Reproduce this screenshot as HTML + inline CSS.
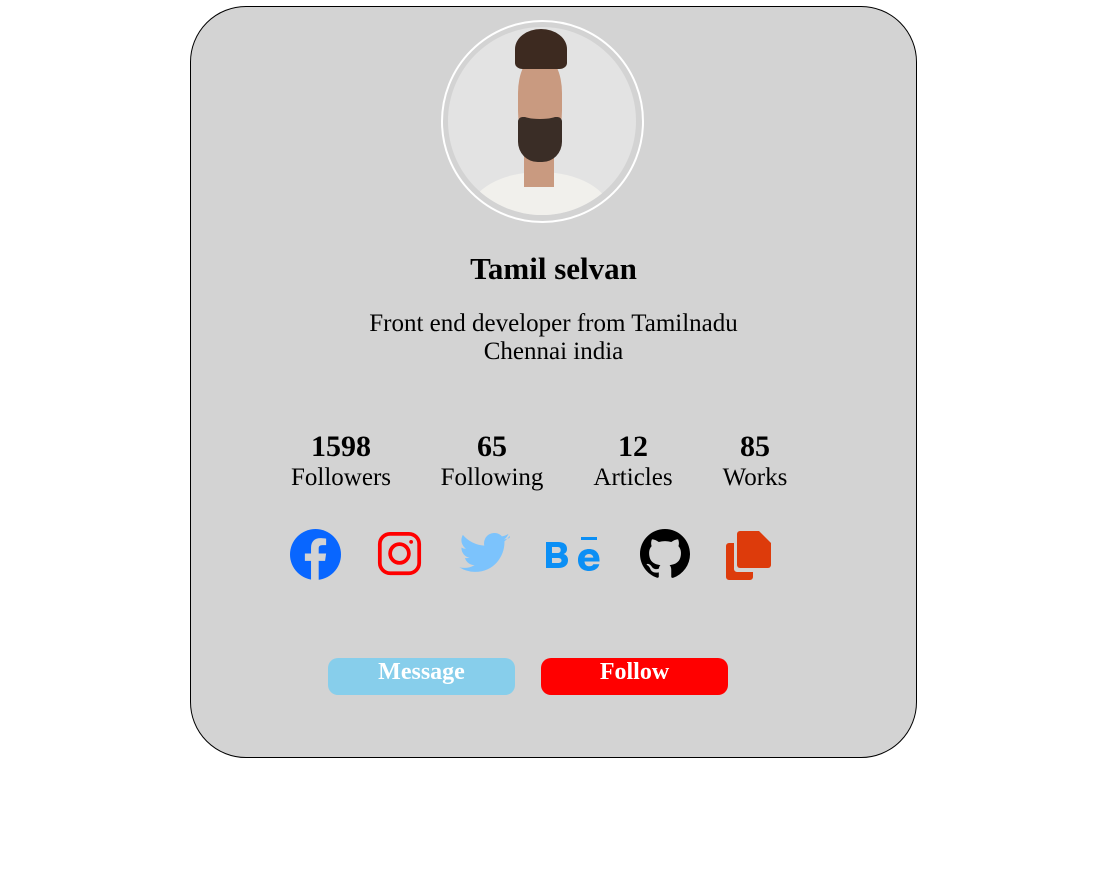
<!DOCTYPE html>
<html><head><style>
body{margin:0;background:#fff;font-family:"Liberation Serif",serif;}
.card{position:absolute;left:190px;top:6px;width:725px;height:750px;background:#d3d3d3;border:1px solid #000;border-radius:56px;}
.t{position:absolute;left:7px;width:1093px;text-align:center;color:#000;}
.s{position:absolute;text-align:center;width:140px;}
.s b{display:block;font-size:30px;line-height:32px;}
.s span{display:block;font-size:25px;line-height:30px;}
.btn{position:absolute;top:658px;height:37px;width:187px;border-radius:10px;color:#fff;font-weight:bold;font-size:24px;text-align:center;line-height:28px;}
svg{position:absolute;}
</style></head><body>
<div class="card"></div>
<div style="position:absolute;left:441px;top:20px;width:199px;height:199px;border:2px solid #fff;border-radius:50%;background:#d3d3d3"></div>
<div style="position:absolute;left:448px;top:27px;width:188px;height:188px;border-radius:50%;background:#e3e3e3;overflow:hidden">
 <div style="position:absolute;left:22px;top:145px;width:140px;height:80px;border-radius:50% 50% 0 0;background:#f1f0ec"></div>
 <div style="position:absolute;left:76px;top:100px;width:30px;height:60px;background:#c99a80"></div>
 <div style="position:absolute;left:70px;top:30px;width:44px;height:90px;border-radius:40%;background:#c99a80"></div>
 <div style="position:absolute;left:70px;top:90px;width:44px;height:45px;border-radius:10% 10% 45% 45%;background:#3a2d26"></div>
 <div style="position:absolute;left:73px;top:82px;width:38px;height:10px;border-radius:50%;background:#c99a80"></div>
 <div style="position:absolute;left:67px;top:2px;width:52px;height:40px;border-radius:50% 50% 15% 15%;background:#3d2a20"></div>
</div>
<div class="t" style="top:251px;font-size:31px;font-weight:bold">Tamil selvan</div>
<div class="t" style="top:310px;font-size:25px;line-height:28px">Front end developer from Tamilnadu<br>Chennai india</div>
<div class="s" style="left:271px;top:431px"><b>1598</b><span>Followers</span></div>
<div class="s" style="left:422px;top:431px"><b>65</b><span>Following</span></div>
<div class="s" style="left:563px;top:431px"><b>12</b><span>Articles</span></div>
<div class="s" style="left:685px;top:431px"><b>85</b><span>Works</span></div>
<svg style="left:290px;top:529px" width="51" height="51" viewBox="0 0 24 24"><circle cx="12" cy="12" r="12" fill="#0866ff"/><path d="M13.5 24V15h3l.5-3.5h-3.5V9.3c0-1 .3-1.7 1.8-1.7H17V4.5c-.4 0-1.5-.2-2.7-.2-2.7 0-4.4 1.6-4.4 4.6v2.6H7V15h2.9v9z" fill="#d3d3d3"/></svg>
<svg style="left:377px;top:531px" width="45" height="45" viewBox="0 0 24 24" fill="none" stroke="#f00" stroke-width="2"><rect x="1.5" y="1.5" width="21" height="21" rx="5.5"/><circle cx="12" cy="12" r="5"/><circle cx="18.2" cy="5.8" r="1" fill="#f00" stroke="none"/></svg>
<svg style="left:459px;top:533px" width="51" height="42" viewBox="0 0 24 20"><path fill="#7cc3fc" d="M24 2.3c-.9.4-1.8.7-2.8.8 1-.6 1.8-1.6 2.2-2.7-1 .6-2 1-3.1 1.2A4.9 4.9 0 0 0 11.9 6C7.8 5.8 4.2 3.9 1.7.9c-.4.7-.7 1.6-.7 2.5 0 1.7.9 3.2 2.2 4.1-.8 0-1.6-.2-2.2-.6v.1c0 2.4 1.7 4.4 3.9 4.8-.7.2-1.5.2-2.2.1.6 2 2.4 3.4 4.6 3.4A9.9 9.9 0 0 1 0 16.3 14 14 0 0 0 7.5 18.5c9.1 0 14-7.5 14-14V3.9c1-.7 1.8-1.6 2.5-2.6z"/></svg>
<svg style="left:546px;top:537px" width="58" height="36" viewBox="0 0 58 36"><g fill="#0b8ff5" fill-rule="evenodd"><path d="M0 5h12c6 0 9 2.5 9 7 0 2.7-1.5 4.3-3.5 5 3 .8 4.5 3 4.5 6.3 0 5-3.8 7.7-9.5 7.7H0zM6 10v6h5.5c2 0 3.2-1 3.2-3s-1.2-3-3.2-3zm0 11v5h6c2.2 0 3.5-.8 3.5-2.5S14.2 21 12 21z"/><path d="M43 12c7 0 10.500 4.500 10.500 11v1.500H38.500c.3 3.200 2 4.800 5 4.800 2 0 3.300-.8 3.800-2h6C52.300 31.500 48.500 34 43 34c-6.800 0-11-4.300-11-11S36.300 12 43 12zm0 5c-2.500 0-4 1.500-4.400 3.600h8.800C47 18.500 45.500 17 43 17z"/><rect x="35" y="0" width="16" height="3"/></g></svg>
<svg style="left:640px;top:529px" width="50" height="50" viewBox="0 0 16 16"><path fill="#000" d="M8 0C3.58 0 0 3.58 0 8c0 3.54 2.29 6.53 5.47 7.59.4.07.55-.17.55-.38v-1.33c-2.23.48-2.7-1.07-2.7-1.07-.36-.92-.89-1.17-.89-1.17-.73-.5.05-.49.05-.49.8.06 1.23.82 1.23.82.71 1.22 1.87.87 2.33.66.07-.52.28-.87.51-1.07-1.78-.2-3.64-.89-3.64-3.95 0-.87.31-1.59.82-2.15-.08-.2-.36-1.02.08-2.12 0 0 .67-.21 2.2.82a7.6 7.6 0 0 1 4 0c1.53-1.04 2.2-.82 2.2-.82.44 1.1.16 1.92.08 2.12.51.56.82 1.27.82 2.15 0 3.07-1.87 3.75-3.65 3.95.29.25.54.73.54 1.48v2.2c0 .21.15.46.55.38A8.01 8.01 0 0 0 16 8c0-4.42-3.58-8-8-8z"/></svg>
<svg style="left:726px;top:529px" width="45" height="51" viewBox="0 0 45 51"><path fill="#dd3b0b" d="M14 2h19l12 12v22a3 3 0 0 1-3 3H14a3 3 0 0 1-3-3V5a3 3 0 0 1 3-3z"/><path fill="#dd3b0b" d="M3 14h5v26a3 3 0 0 0 3 3h16v5a3 3 0 0 1-3 3H3a3 3 0 0 1-3-3V17a3 3 0 0 1 3-3z"/></svg>
<div class="btn" style="left:328px;background:#87ceeb">Message</div>
<div class="btn" style="left:541px;background:#f00">Follow</div>
</body></html>
